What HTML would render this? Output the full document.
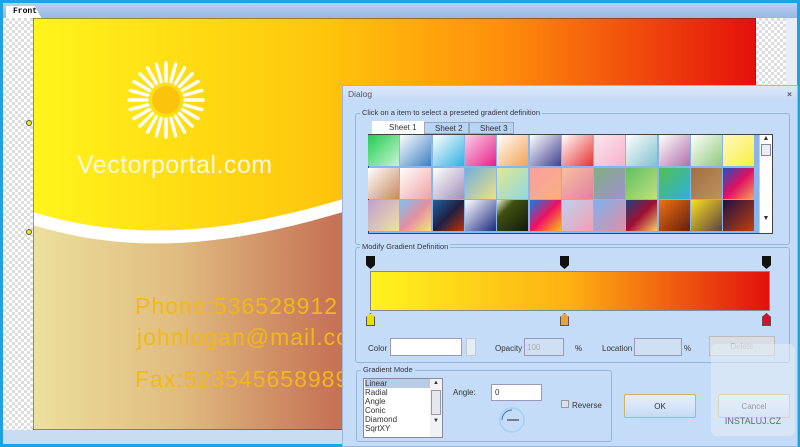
<!DOCTYPE html>
<html><head><meta charset="utf-8"><style>
*{margin:0;padding:0;box-sizing:border-box}
body{width:800px;height:447px;overflow:hidden;background:#1ea2e0;font-family:"Liberation Sans",sans-serif;position:relative}
.abs{position:absolute}
.chk{background-color:#fff;background-image:linear-gradient(45deg,#ddd 25%,transparent 25%,transparent 75%,#ddd 75%),linear-gradient(45deg,#ddd 25%,transparent 25%,transparent 75%,#ddd 75%);background-size:6px 6px;background-position:0 0,3px 3px}
.dlg{left:342px;top:85px;width:456px;height:362px;background:#c4dcf7;border:1px solid #9ab8dc;font-size:8px;color:#333}
.grp{position:absolute;border:1px solid #98b6da;border-radius:3px}
.grp>.lg{position:absolute;top:-6px;left:4px;background:#c4dcf7;padding:0 2px;font-size:7.5px;color:#334}
.sw{position:absolute;width:31px;height:31px}
.btn{position:absolute;border:1px solid #c9b46a;background:linear-gradient(#e6f0fc,#c6daf4);text-align:center;font-size:8px;border-radius:2px}
</style></head><body>
<div class="abs" style="left:3px;top:3px;width:794px;height:15px;background:linear-gradient(#b8cff0,#9ab8e4)"></div>
<div class="abs" style="left:6px;top:6px;width:36px;height:13px;background:#fff;clip-path:polygon(0 0,80% 0,100% 100%,0 100%);font:bold 8px 'Liberation Mono',monospace;padding:1px 0 0 7px">Front</div>
<div class="abs chk" style="left:3px;top:18px;width:31px;height:413px"></div>
<div class="abs chk" style="left:756px;top:18px;width:30px;height:413px"></div>
<div class="abs" style="left:786px;top:18px;width:11px;height:413px;background:#e8eef8"></div>
<div class="abs" style="left:3px;top:430px;width:794px;height:14px;background:#c8dcf4"></div>
<svg class="abs" style="left:33px;top:18px" width="723" height="412">
<defs>
<linearGradient id="y" x1="0" x2="1"><stop offset="0" stop-color="#fff51c"/><stop offset=".4" stop-color="#ffc60c"/><stop offset=".65" stop-color="#ff8e0c"/><stop offset="1" stop-color="#e4100c"/></linearGradient>
<linearGradient id="r" x1="0" x2="1"><stop offset="0" stop-color="#ece09c"/><stop offset=".2" stop-color="#e0bc80"/><stop offset=".4" stop-color="#c87858"/><stop offset=".7" stop-color="#b02828"/><stop offset="1" stop-color="#901010"/></linearGradient>
</defs>
<rect width="723" height="412" fill="url(#y)"/>
<path d="M0,194 C100,225 200,215 320,178 L723,110 L723,412 L0,412Z" fill="#fff"/>
<path d="M0,207 C100,238 200,228 320,191 L723,123 L723,412 L0,412Z" fill="url(#r)"/>
<rect x="0" y="0" width="723" height="412" fill="none" stroke="#333" stroke-width="1"/>
<circle cx="133" cy="82" r="14" fill="#fbc40c"/>
<g transform="translate(133,82)" stroke="#fff" stroke-width="3.4" stroke-linecap="round">
<g id="p"><line x1="0" y1="-19" x2="0" y2="-37"/><line x1="0" y1="19" x2="0" y2="37"/></g>
<use href="#p" transform="rotate(15)"/><use href="#p" transform="rotate(30)"/><use href="#p" transform="rotate(45)"/><use href="#p" transform="rotate(60)"/><use href="#p" transform="rotate(75)"/><use href="#p" transform="rotate(90)"/><use href="#p" transform="rotate(105)"/><use href="#p" transform="rotate(120)"/><use href="#p" transform="rotate(135)"/><use href="#p" transform="rotate(150)"/><use href="#p" transform="rotate(165)"/>
</g>
<text x="44" y="155" font-family="Liberation Sans" font-size="25" fill="#fff8e0" letter-spacing="0.5">Vectorportal.com</text>
<g font-family="Liberation Sans" font-size="23" fill="#f0b818" letter-spacing="1">
<text x="102" y="296">Phone:536528912</text><text x="104" y="327">johnlogan@mail.com</text><text x="102" y="369">Fax:523545658989</text></g>
</svg>
<div class="abs" style="left:26px;top:120px;width:6px;height:6px;border-radius:50%;border:1px solid #555;background:#ee0"></div>
<div class="abs" style="left:26px;top:229px;width:6px;height:6px;border-radius:50%;border:1px solid #555;background:#ee0"></div>

<div class="abs dlg">
<div style="height:15px;background:linear-gradient(#dbe8f9,#c6daf6);padding:3px 5px;font-size:8.5px;color:#556">Dialog<span style="float:right;font-weight:bold">×</span></div>
<div class="grp" style="left:12px;top:27px;width:435px;height:132px"><div class="lg">Click on a item to select a preseted gradient definition</div>
<div class="abs" style="left:16px;top:7px;width:158px;height:13px;font-size:8px">
<div class="abs" style="left:0;top:0;width:52px;height:13px;background:#fff;padding:2px 0 0 17px">Sheet 1</div>
<div class="abs" style="left:52px;top:1px;width:45px;height:12px;background:#b8d4f4;border:1px solid #9ab;padding:1px 0 0 10px">Sheet 2</div>
<div class="abs" style="left:97px;top:1px;width:45px;height:12px;background:#b8d4f4;border:1px solid #9ab;padding:1px 0 0 10px">Sheet 3</div></div>
<div class="abs" style="left:12px;top:20px;width:405px;height:100px;background:#8ab4ec;border:1px solid #444"></div>
<div class="abs" style="left:403px;top:21px;width:13px;height:98px;background:#fff;border-left:1px solid #ccc;font-size:7px;text-align:center;color:#333">▲<div style="margin:2px 1px;height:12px;border:1px solid #889;background:#e8eef6"></div><div style="margin-top:59px">▼</div></div>
</div>
<div id="g"></div>
<div class="grp" style="left:12px;top:161px;width:435px;height:116px"><div class="lg">Modify Gradient Definition</div>
<div class="abs" style="left:14px;top:23px;width:400px;height:40px;background:linear-gradient(90deg,#fff41e,#fdb012 50%,#e2100e);border:1px solid #888"></div>
<div class="abs" style="left:10px;top:8px;width:9px;height:13px;background:#111;clip-path:polygon(0 0,100% 0,100% 70%,50% 100%,0 70%)"></div>
<div class="abs" style="left:204px;top:8px;width:9px;height:13px;background:#111;clip-path:polygon(0 0,100% 0,100% 70%,50% 100%,0 70%)"></div>
<div class="abs" style="left:406px;top:8px;width:9px;height:13px;background:#111;clip-path:polygon(0 0,100% 0,100% 70%,50% 100%,0 70%)"></div>
<div class="abs" style="left:10px;top:65px;width:9px;height:13px;background:#e8e000;border:1px solid #555;clip-path:polygon(50% 0,100% 30%,100% 100%,0 100%,0 30%)"></div>
<div class="abs" style="left:204px;top:65px;width:9px;height:13px;background:#e8a040;border:1px solid #555;clip-path:polygon(50% 0,100% 30%,100% 100%,0 100%,0 30%)"></div>
<div class="abs" style="left:406px;top:65px;width:9px;height:13px;background:#d8102a;border:1px solid #555;clip-path:polygon(50% 0,100% 30%,100% 100%,0 100%,0 30%)"></div>
<div class="abs" style="left:12px;top:96px">Color</div>
<div class="abs" style="left:34px;top:90px;width:72px;height:18px;background:#fff;border:1px solid #99b"></div>
<div class="abs" style="left:110px;top:90px;width:10px;height:18px;background:#e4ecf6;border:1px solid #bcc"></div>
<div class="abs" style="left:139px;top:96px">Opacity</div>
<div class="abs" style="left:168px;top:90px;width:40px;height:18px;background:#d0e0f4;border:1px solid #99b;color:#aaa;padding:4px 2px">100</div>
<div class="abs" style="left:219px;top:96px">%</div>
<div class="abs" style="left:246px;top:96px">Location</div>
<div class="abs" style="left:278px;top:90px;width:48px;height:18px;background:#d0e0f4;border:1px solid #99b"></div>
<div class="abs" style="left:328px;top:96px">%</div>
<div class="abs" style="left:353px;top:88px;width:66px;height:20px;background:#d8dde4;border:1px solid #bbb;color:#aaa;text-align:center;padding-top:5px">Delete</div>
</div>
<div class="grp" style="left:13px;top:284px;width:256px;height:72px"><div class="lg">Gradient Mode</div>
<div class="abs" style="left:6px;top:7px;width:80px;height:60px;background:#fff;border:1px solid #889;line-height:9px;font-size:8px;padding-left:1px">
<div style="background:#b8cce8">Linear</div>Radial<br>Angle<br>Conic<br>Diamond<br>SqrtXY
<div class="abs" style="right:0;top:0;width:12px;height:58px;background:#f0f2f6;font-size:6px;text-align:center">▲<div style="margin:2px 1px;height:25px;border:1px solid #99a;background:#e4e8ee"></div>▼</div></div>
<div class="abs" style="left:96px;top:17px">Angle:</div>
<div class="abs" style="left:134px;top:13px;width:51px;height:17px;background:#fff;border:1px solid #99b;padding:3px">0</div>
<svg class="abs" style="left:140px;top:34px" width="30" height="30"><circle cx="15" cy="15" r="12" fill="none" stroke="#a8cff2" stroke-width="1.5"/><path d="M5,15 A10,10 0 0,1 15,5" fill="none" stroke="#3a6fbf" stroke-width="1"/><path d="M10,15 H22" stroke="#222"/></svg>
</div>
<div class="abs" style="left:218px;top:314px;width:8px;height:8px;border:1px solid #999;background:#dde"></div>
<div class="abs" style="left:229px;top:315px">Reverse</div>
<div class="btn" style="left:281px;top:308px;width:72px;height:24px;padding-top:7px">OK</div>
<div class="btn" style="left:375px;top:308px;width:72px;height:24px;padding-top:7px">Cancel</div>
<div class="abs" style="left:368px;top:258px;width:84px;height:92px;background:rgba(230,238,246,.55);border-radius:6px;text-align:center;color:#667;font-size:9px;padding-top:72px">INSTALUJ.CZ</div>
</div>
<script>
var c=[["#22cc55,#c8f4d0","#fff,#3b7fc0","#fff,#30b0e0","#f8d0e8,#e8208a","#fff,#f4a050","#fff,#404090","#fff,#e83030","#f8e8f0,#f8b0c8","#fff,#80c0d0","#fff,#b070a8","#fff,#90c878","#fff8c0,#f8f040"],
["#fff,#c88860","#fff,#f0a0a0","#fff,#a090b8","#70b0e0,#f0e080","#e0e890,#90d8e0","#f8a0a0,#f8b080","#f8c0a0,#e080a0","#80b080,#a090d0","#60c060,#c0e080","#50c050,#30b0e0","#a07040,#c09060","#2050c0,#e01060,#f0a060"],
["#c0a0d0,#f0e0a0","#80c0f0,#e090a0,#f8e080","#2060a0,#202040,#c03010","#fff,#1a2a80","#f0f0d0,#405010 30%,#101808","#1080e0,#f01060,#f8c020","#c0d0f0,#f0a0b0","#80b0f0,#e090a0","#204080,#a01030,#f0d070","#f07010,#602010","#f8e020,#604040","#201040,#c04010"]];
var h="";for(var r=0;r<3;r++)for(var i=0;i<12;i++)h+='<div class="sw" style="left:'+(25+i*32.3)+'px;top:'+(49+r*32.5)+'px;background:linear-gradient(135deg,'+c[r][i]+')"></div>';
document.getElementById("g").outerHTML=h;
</script>
</body></html>
